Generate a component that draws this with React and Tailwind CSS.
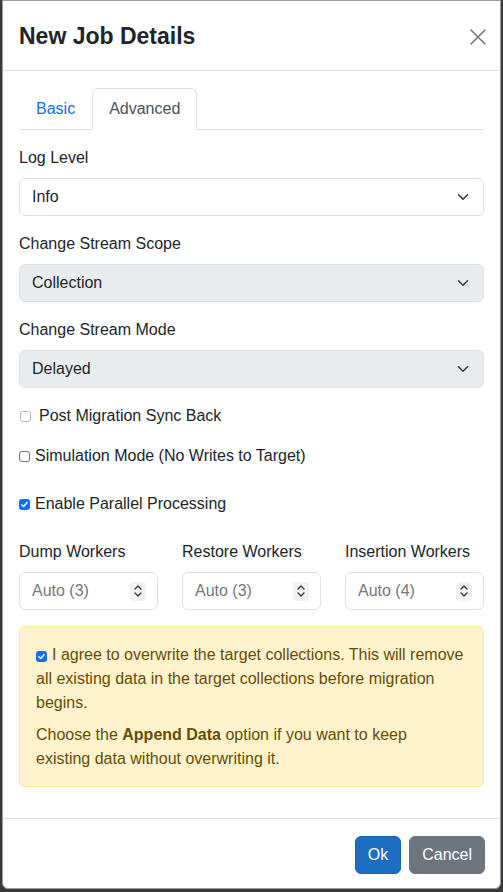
import React from 'react';

const font = { fontFamily: '"Liberation Sans", Arial, Helvetica, sans-serif' };

const Chevron = () => (
  <svg width="12" height="12" viewBox="0 0 16 16" fill="none" stroke="#343a40" strokeWidth="2" strokeLinecap="round" strokeLinejoin="round">
    <path d="m2 5 6 6 6-6" />
  </svg>
);

const Spinner = () => (
  <span className="flex h-[19px] w-[16px] items-center justify-center rounded-[4px] bg-[#f1f1f1]">
    <svg width="10" height="16" viewBox="0 0 10 16" fill="none" stroke="#3a3a3a" strokeWidth="1.4" strokeLinecap="round" strokeLinejoin="round">
      <path d="M2 6 5 3l3 3" />
      <path d="M2 10l3 3 3-3" />
    </svg>
  </span>
);

const Check = ({ checked, light }) =>
  checked ? (
    <span className="flex h-[11px] w-[11px] shrink-0 items-center justify-center rounded-[3px] bg-[#0d6efd]">
      <svg width="9" height="9" viewBox="0 0 10 10" fill="none" stroke="#fff" strokeWidth="1.6" strokeLinecap="round" strokeLinejoin="round">
        <path d="M2 5.2 4.1 7.3 8 2.8" />
      </svg>
    </span>
  ) : (
    <span className={`h-[11px] w-[11px] shrink-0 rounded-[3px] border bg-white ${light ? 'border-[#b8b8b8]' : 'border-[#6f6f6f]'}`} />
  );

const Select = ({ value, disabled }) => (
  <div className={`flex h-[38px] items-center justify-between rounded-[6px] border border-[#dee2e6] pl-3 pr-[14px] ${disabled ? 'bg-[#e9ecef]' : 'bg-white'}`}>
    <span className="text-[#212529]">{value}</span>
    <Chevron />
  </div>
);

const Field = ({ label, children }) => (
  <div className="mb-4">
    <div className="mb-2 leading-6 text-[#212529]">{label}</div>
    {children}
  </div>
);

const workers = [
  { label: 'Dump Workers', value: 'Auto (3)' },
  { label: 'Restore Workers', value: 'Auto (3)' },
  { label: 'Insertion Workers', value: 'Auto (4)' },
];

export default function App() {
  return (
    <div className="min-h-screen bg-[#3a3a3a]" style={font}>
      <div className="ml-[2px] flex h-[889px] w-[499px] flex-col rounded-b-[6px] border border-[#9a9a9a] bg-white text-base leading-6">
        <div className="flex h-[70px] shrink-0 items-center justify-between border-b border-[#dee2e6] pl-4 pr-[14px] pt-[2px]">
          <h5 className="text-[23px] font-bold leading-none text-[#212529]">New Job Details</h5>
          <svg width="16" height="16" viewBox="0 0 16 16" stroke="#6c757d" strokeWidth="1.5" strokeLinecap="round">
            <path d="M1 1l14 14M15 1 1 15" />
          </svg>
        </div>

        <div className="flex-1 px-4 pt-[17px]">
          <div className="flex border-b border-[#dee2e6]">
            <div className="-mb-px border border-transparent px-4 py-2 text-[#0d6efd]">Basic</div>
            <div className="-mb-px rounded-t-[6px] border border-[#dee2e6] border-b-white bg-white px-4 py-2 text-[#495057]">Advanced</div>
          </div>

          <div className="pt-4">
            <Field label="Log Level">
              <Select value="Info" />
            </Field>
            <Field label="Change Stream Scope">
              <Select value="Collection" disabled />
            </Field>
            <Field label="Change Stream Mode">
              <Select value="Delayed" disabled />
            </Field>

            <div className="mb-4 flex items-center gap-2 pl-px text-[#212529]">
              <Check light />
              <span>Post Migration Sync Back</span>
            </div>
            <div className="mb-6 flex items-center gap-[5px] text-[#212529]">
              <Check />
              <span>Simulation Mode (No Writes to Target)</span>
            </div>
            <div className="mb-6 flex items-center gap-[5px] text-[#212529]">
              <Check checked />
              <span>Enable Parallel Processing</span>
            </div>

            <div className="mb-4 grid grid-cols-3 gap-x-6">
              {workers.map((w) => (
                <div key={w.label}>
                  <div className="mb-2 text-[#212529]">{w.label}</div>
                  <div className="flex h-[38px] items-center justify-between rounded-[6px] border border-[#dee2e6] bg-white pl-3 pr-[11px]">
                    <span className="text-[#777]">{w.value}</span>
                    <Spinner />
                  </div>
                </div>
              ))}
            </div>

            <div className="mb-4 rounded-[6px] border border-[#ffe69c] bg-[#fff3cd] px-4 pb-[15px] pt-4 text-[#664d03]">
              <p className="mb-2">
                <span className="mr-[5px] inline-flex translate-y-px align-baseline">
                  <Check checked />
                </span>
                I agree to overwrite the target collections. This will remove all existing data in the target collections before migration begins.
              </p>
              <p className="pr-6">
                Choose the <b>Append Data</b> option if you want to keep existing data without overwriting it.
              </p>
            </div>
          </div>
        </div>

        <div className="flex h-[70px] shrink-0 items-center justify-end gap-2 border-t border-[#dee2e6] pr-[15px] pt-[2px]">
          <button className="h-[38px] rounded-[6px] border border-[#1861ac] bg-[#1b6ec2] px-3 text-white">Ok</button>
          <button className="h-[38px] rounded-[6px] border border-[#6c757d] bg-[#6c757d] px-3 text-white">Cancel</button>
        </div>
      </div>
    </div>
  );
}
